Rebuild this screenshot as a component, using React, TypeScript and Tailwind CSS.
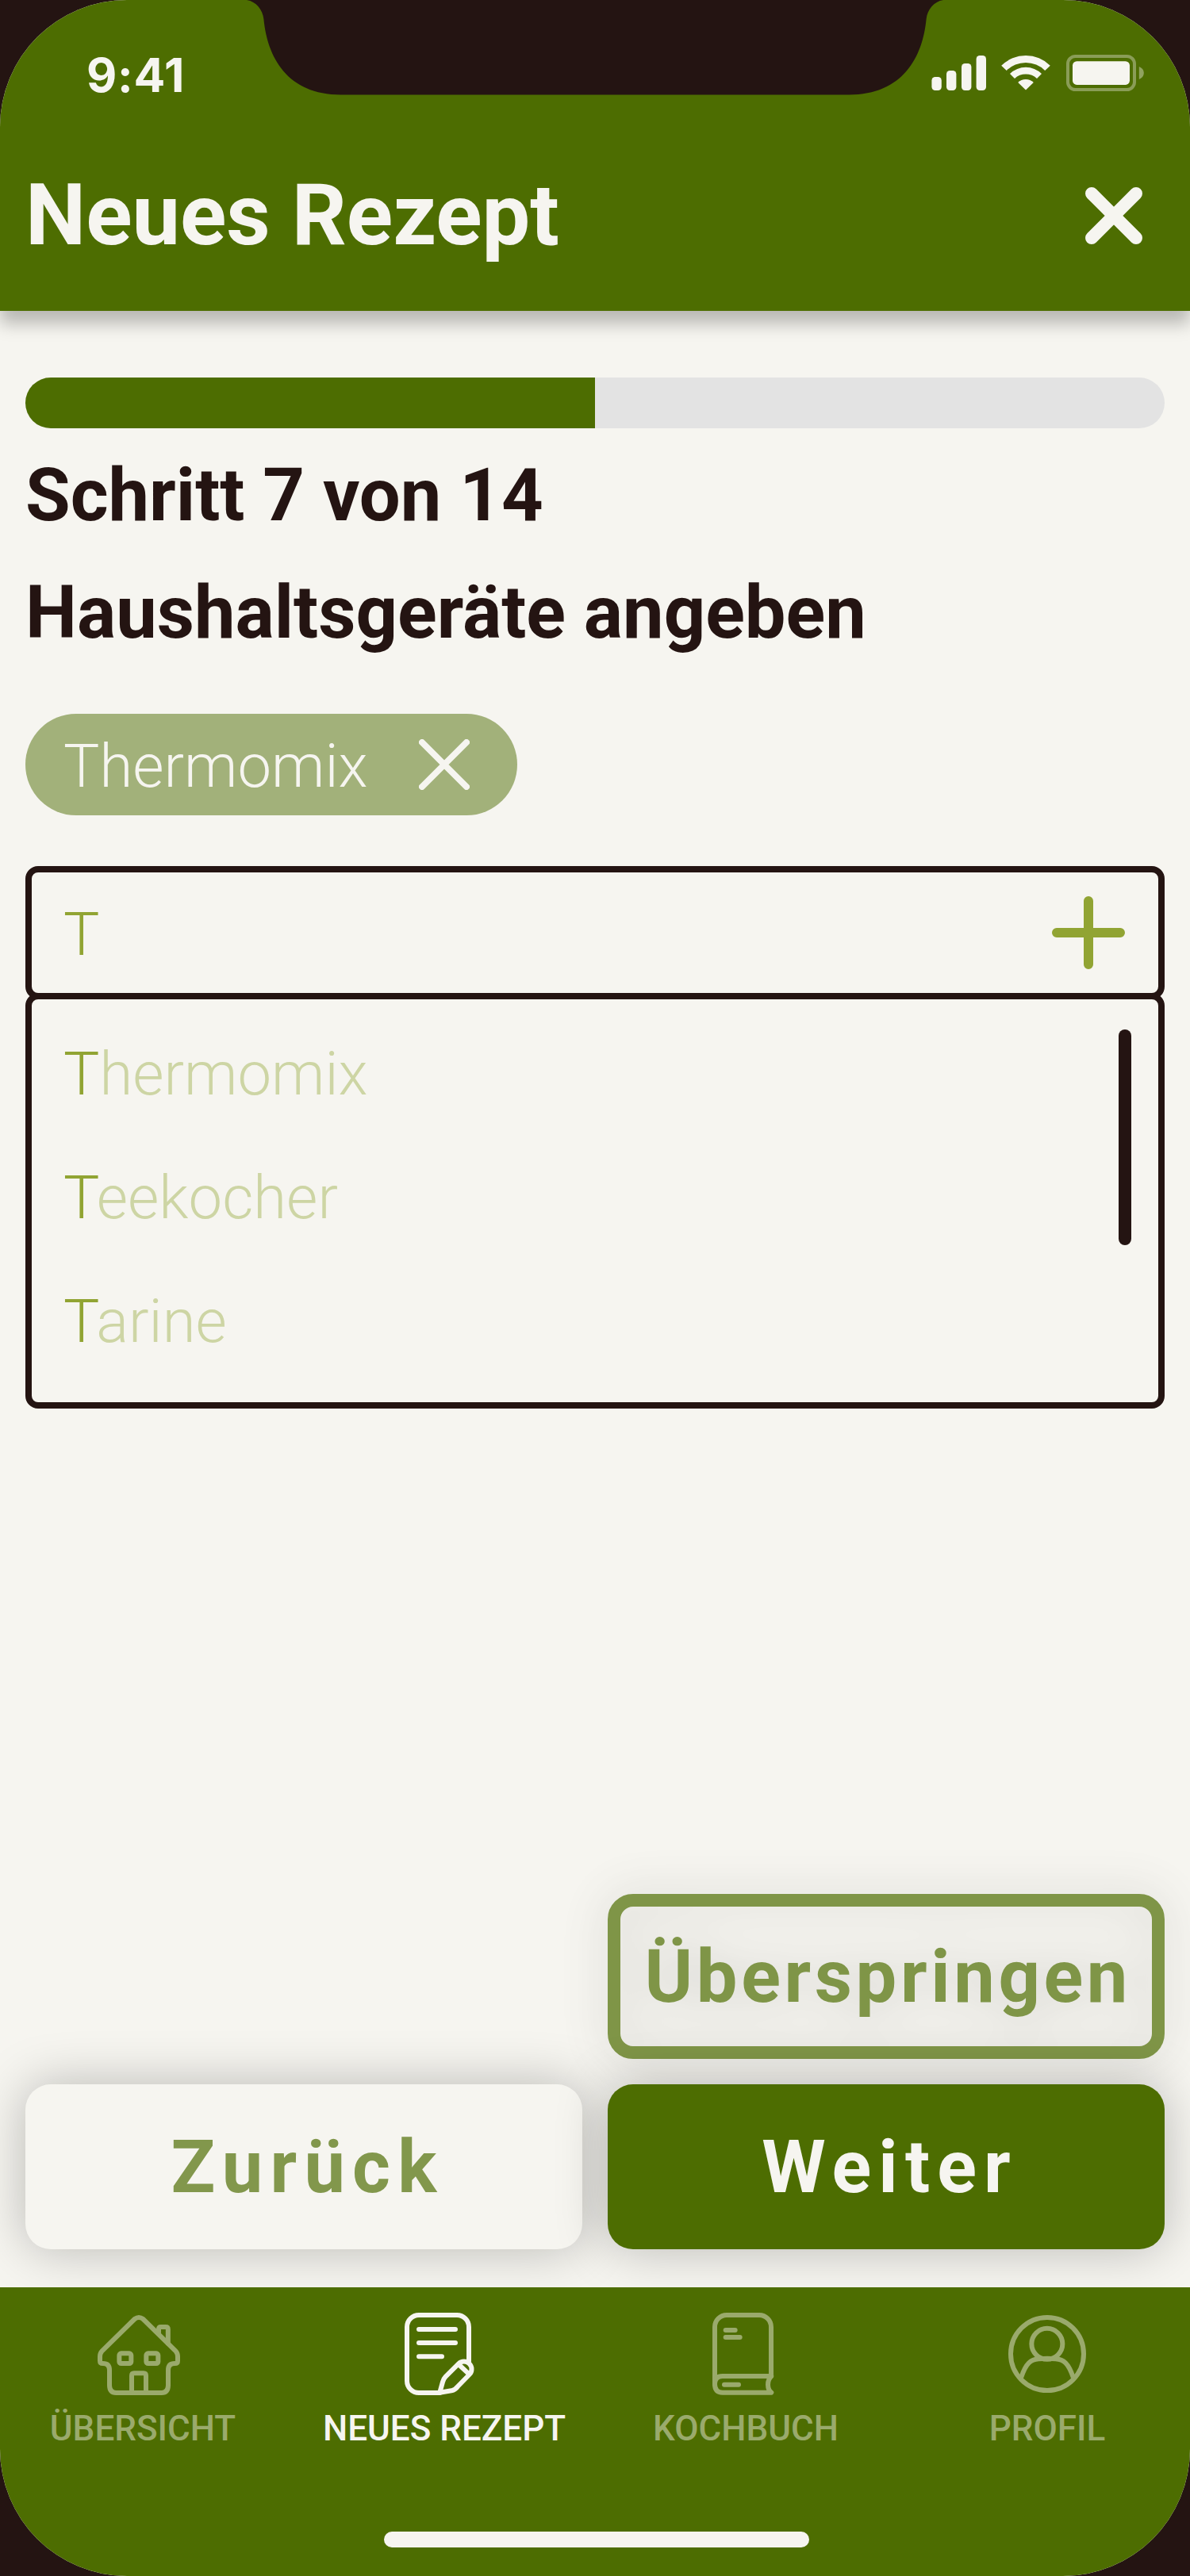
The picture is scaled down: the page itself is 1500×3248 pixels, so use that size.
import type { ReactNode } from 'react';

const SUGGESTIONS = ['Thermomix', 'Teekocher', 'Tarine'];
const QUERY = 'T';
const STEP = 7;
const STEPS = 14;

function Notch() {
  return (
    <svg className="absolute left-0 top-0" width="1500" height="120" viewBox="0 0 1500 120" aria-hidden="true">
      <path
        fill="#241412"
        d="M311 0C323 2 331 12 332.4 24C337 72 362 119.5 430 119.5H1070C1138 119.5 1163 72 1167.6 24C1169 12 1177 2 1189 0Z"
      />
    </svg>
  );
}

function SignalIcon() {
  return (
    <svg width="69" height="48" viewBox="1174 68 69 48" fill="#f6f5f0" aria-hidden="true">
      <rect x="1174.4" y="97" width="12.4" height="17" rx="4.4" />
      <rect x="1193" y="89" width="12.4" height="25" rx="4.4" />
      <rect x="1212" y="80" width="12.4" height="34" rx="4.4" />
      <rect x="1230.6" y="70" width="12.4" height="44" rx="4.4" />
    </svg>
  );
}

function WifiIcon() {
  return (
    <svg width="62" height="48" viewBox="-31 -45.5 62 48" fill="#f6f5f0" aria-hidden="true">
      <path d="M-30.8 -30.8A43.8 43.8 0 0 1 30.8 -30.8L24.2 -24.6A34.5 34.5 0 0 0 -24.2 -24.6Z" />
      <path d="M-20 -20.6A28.8 28.8 0 0 1 20 -20.6L14 -14.4A20 20 0 0 0 -14 -14.4Z" />
      <path d="M-9.8 -9.4A13.6 13.6 0 0 1 9.8 -9.4L0 0Z" />
    </svg>
  );
}

function BatteryIcon() {
  return (
    <svg width="98" height="48" viewBox="1344 68 98 48" fill="#f6f5f0" aria-hidden="true">
      <rect x="1346" y="71" width="84" height="42" rx="9.5" fill="none" stroke="#f6f5f0" strokeWidth="4" opacity="0.36" />
      <rect x="1352" y="77.3" width="72" height="29.6" rx="5.3" />
      <path d="M1435.8 84C1439.6 85.5 1441.8 88.6 1441.8 92C1441.8 95.4 1439.6 98.5 1435.8 100Z" opacity="0.4" />
    </svg>
  );
}

function Tab({ label, active, viewBox, children }: { label: string; active?: boolean; viewBox: string; children: ReactNode }) {
  return (
    <a className={active ? 'flex w-[380px] shrink-0 flex-col items-center text-[#f6f5f0]' : 'flex w-[380px] shrink-0 flex-col items-center text-[#9aaa6c]'}>
      <svg
        width="120"
        height="120"
        viewBox={viewBox}
        fill="none"
        stroke="currentColor"
        strokeWidth="18"
        strokeLinecap="round"
        strokeLinejoin="round"
        aria-hidden="true"
      >
        {children}
      </svg>
      <span className="mt-[6px] whitespace-nowrap text-[44px] font-medium leading-[52px]">{label}</span>
    </a>
  );
}

export default function App() {
  return (
    <div className="h-[3248px] w-[1500px] overflow-hidden bg-[#241412] font-['Roboto',sans-serif]">
      <div className="flex h-full flex-col overflow-hidden rounded-[160px] bg-[#f6f5f0] text-[#241412]">
        <header className="relative h-[392px] shrink-0 bg-[#4d6d01] text-[#f6f5f0] shadow-[0_16px_20px_rgba(0,0,0,0.25)]">
          <Notch />
          <div className="relative flex h-[176px] items-start justify-between pl-[109px] pr-[58px] pt-[68px]">
            <span className="font-['Inter',sans-serif] text-[59px] font-bold leading-[53px] tracking-[0.8px]">9:41</span>
            <div className="flex items-start">
              <SignalIcon />
              <div className="ml-[19px]">
                <WifiIcon />
              </div>
              <div className="ml-[20px]">
                <BatteryIcon />
              </div>
            </div>
          </div>
          <div className="flex h-[190px] items-center justify-between pl-8 pr-[60px]">
            <h1 className="text-[108px] font-bold leading-none">Neues Rezept</h1>
            <button aria-label="Schließen" className="mt-[2px]">
              <svg width="72" height="72" viewBox="0 0 72 72" stroke="#f6f5f0" strokeWidth="16" strokeLinecap="round">
                <path d="M8 8L64 64M64 8L8 64" />
              </svg>
            </button>
          </div>
        </header>

        <main className="flex flex-1 flex-col px-8 pb-12 pt-[84px]">
          <div className="h-16 shrink-0 overflow-hidden rounded-full bg-[#e3e3e3]">
            <div className="h-full bg-[#4d6d01]" style={{ width: `${(STEP / STEPS) * 100}%` }} />
          </div>
          <h2 className="mt-[11px] text-[92px] font-bold leading-[148px]">
            Schritt {STEP} von {STEPS}
          </h2>
          <h2 className="text-[92px] font-bold leading-[148px]">Haushaltsgeräte angeben</h2>

          <div className="mt-[53px] flex h-32 w-[620px] items-center justify-between rounded-full bg-[#a2b17a] pl-12 pr-[60px] text-[#f6f5f0]">
            <span className="mt-1 text-[76px] font-light leading-[124px]">Thermomix</span>
            <svg width="64" height="64" viewBox="0 0 64 64" stroke="currentColor" strokeWidth="8" strokeLinecap="round" aria-hidden="true">
              <path d="M4 4L60 60M60 4L4 60" />
            </svg>
          </div>

          <div className="mt-16 flex h-[168px] shrink-0 items-center justify-between rounded-2xl border-8 border-[#241412] pl-10 pr-[42px] text-[#91a433]">
            <span className="mt-1 text-[76px] font-light leading-[148px]">{QUERY}</span>
            <svg width="92" height="92" viewBox="0 0 92 92" stroke="currentColor" strokeWidth="12" strokeLinecap="round" aria-hidden="true">
              <path d="M46 6V86M6 46H86" />
            </svg>
          </div>
          <div className="-mt-2 flex h-[524px] shrink-0 items-start justify-between rounded-2xl border-8 border-[#241412] pl-10 pr-[34px]">
            <ul className="pt-4">
              {SUGGESTIONS.map((name) => (
                <li key={name} className="text-[76px] font-light leading-[156px] text-[#91a433]">
                  {QUERY}
                  <span className="text-[#91a433]/40">{name.slice(QUERY.length)}</span>
                </li>
              ))}
            </ul>
            <div className="mt-[38px] h-[272px] w-4 rounded-full bg-[#241412]" />
          </div>

          <div className="mt-auto grid grid-cols-2 gap-8 text-[92px] font-bold leading-none">
            <button className="col-start-2 flex h-[208px] items-center justify-center rounded-[32px] border-[16px] border-[#4d6d01] text-[#4d6d01] opacity-70 drop-shadow-[0_0_30px_rgba(0,0,0,0.25)]">
              <span className="-mr-[0.05em] mt-px tracking-[0.05em]">Überspringen</span>
            </button>
            <button className="relative col-start-1 flex h-[208px] items-center justify-center rounded-[32px] bg-[#f6f5f0] text-[#82974c] shadow-[0_0_64px_rgba(0,0,0,0.25)]">
              <span className="-mr-[0.1em] mt-px tracking-[0.1em]">Zurück</span>
            </button>
            <button className="relative flex h-[208px] items-center justify-center rounded-[32px] bg-[#4d6d01] text-[#f6f5f0] shadow-[0_0_64px_rgba(0,0,0,0.25)]">
              <span className="-mr-[0.1em] mt-px tracking-[0.1em]">Weiter</span>
            </button>
          </div>
        </main>

        <footer className="relative flex h-[364px] shrink-0 flex-col bg-[#4d6d01] pt-[26px]">
          <nav className="-ml-[10px] flex">
            <Tab label="ÜBERSICHT" viewBox="363 90 360 360">
              <path d="M512 132L388 254Q381 262 381 274V290Q381 300 392 300Q417 300 417 325V382Q417 411 442 411H614Q639 411 639 382V325Q639 300 664 300Q675 300 675 290V274Q675 262 668 254L544 132Q528 120 512 132Z" />
              <path d="M603 182V170Q603 162 611 162H630Q638.5 162 638.5 170V224" />
              <rect x="454" y="262" width="45" height="38" rx="7" />
              <rect x="556" y="262" width="45" height="38" rx="7" />
              <path d="M501 408V346Q501 337 510 337H546Q555 337 555 346V408" />
            </Tab>
            <Tab label="NEUES REZEPT" active viewBox="363 90 360 360">
              <path d="M636 292V162A45 45 0 0 0 591 117H447A45 45 0 0 0 402 162V366A45 45 0 0 0 447 411H526" />
              <path d="M447 171H585M447 222H585M447 274H534" />
              <path d="M526 410L537 370Q541 357 548 350L597 301A28.9 28.9 0 0 1 638 342L594 387Q585 400 570 403Z" />
              <path d="M600 306L634 338" />
            </Tab>
            <Tab label="KOCHBUCH" viewBox="300 90 360 360">
              <path d="M363 378V162A45 45 0 0 1 408 117H531A45 45 0 0 1 576 162V348" />
              <path d="M363 378Q363 348 392 348H577Q564 360 564 380Q564 400 577 410H392Q363 410 363 378Z" />
              <path d="M404 174H440M404 201H458M399 380H453" />
            </Tab>
            <Tab label="PROFIL" viewBox="240 90 360 360">
              <circle cx="420" cy="264" r="138" />
              <circle cx="419.5" cy="226" r="58.5" />
              <path d="M322 352C340 298 358 285 388 283Q420 280 452 283C482 285 500 298 518 352" />
            </Tab>
          </nav>
          <div className="mb-9 ml-[484px] mt-auto h-5 w-[536px] rounded-full bg-[#f6f5f0]" />
        </footer>
      </div>
    </div>
  );
}
